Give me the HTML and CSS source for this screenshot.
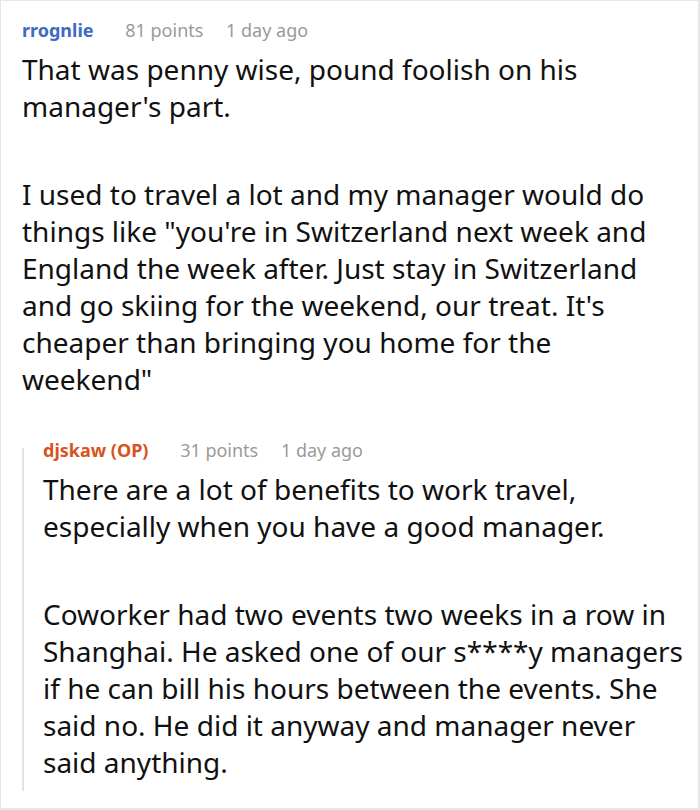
FILE: index.html
```html
<!DOCTYPE html>
<html lang="en">
<head>
<meta charset="utf-8">
<title>Comments</title>
<link rel="stylesheet" href="styles.css">
</head>
<body>
<div class="frame">
  <div class="comment">
    <div class="meta">
      <span class="author author-blue">rrognlie</span>
      <span class="points">81 points</span>
      <span class="time">1 day ago</span>
    </div>
    <div class="body">
      <p>That was penny wise, pound foolish on his<br>manager's part.</p>
      <p>I used to travel a lot and my manager would do<br>things like "you're in Switzerland next week and<br>England the week after. Just stay in Switzerland<br>and go skiing for the weekend, our treat. It's<br>cheaper than bringing you home for the<br>weekend"</p>
    </div>
    <div class="reply">
      <div class="thread-line"></div>
      <div class="reply-content">
        <div class="meta">
          <span class="author author-op">djskaw (OP)</span>
          <span class="points">31 points</span>
          <span class="time">1 day ago</span>
        </div>
        <div class="body">
          <p>There are a lot of benefits to work travel,<br>especially when you have a good manager.</p>
          <p>Coworker had two events two weeks in a row in<br>Shanghai. He asked one of our s****y managers<br>if he can bill his hours between the events. She<br>said no. He did it anyway and manager never<br>said anything.</p>
        </div>
      </div>
    </div>
  </div>
</div>
</body>
</html>
```

FILE: styles.css
```css
html, body {
  margin: 0;
  padding: 0;
  background: #ffffff;
}

body {
  font-family: "Noto Sans", "Open Sans", "DejaVu Sans", sans-serif;
  color: #111111;
}

.frame {
  width: 700px;
  height: 810px;
  box-sizing: border-box;
  border-top: 1px solid #e6e6e6;
  border-left: 1px solid #e6e6e6;
  border-right: 2px solid #e6e6e6;
  border-bottom: 2px solid #e6e6e6;
  overflow: hidden;
}

.comment {
  padding: 17px 0 0 21px;
}

.meta {
  font-size: 18px;
  line-height: 24px;
  white-space: nowrap;
  margin-bottom: 9px;
}

.author {
  font-weight: 700;
  margin-right: 27px;
}

.author-blue {
  color: #3d6cbf;
}

.author-op {
  color: #d8531e;
}

.points {
  color: #9a9a9a;
  margin-right: 18px;
}

.time {
  color: #9a9a9a;
}

.body p {
  margin: 0;
  font-size: 28px;
  line-height: 37px;
  white-space: nowrap;
}

.body p + p {
  margin-top: 51px;
}

.reply {
  margin-top: 40px;
  display: grid;
  grid-template-columns: 2px 1fr;
  column-gap: 19px;
}

.thread-line {
  background: #e3e3e3;
  margin-top: 10px;
  margin-bottom: -10px;
}
```
